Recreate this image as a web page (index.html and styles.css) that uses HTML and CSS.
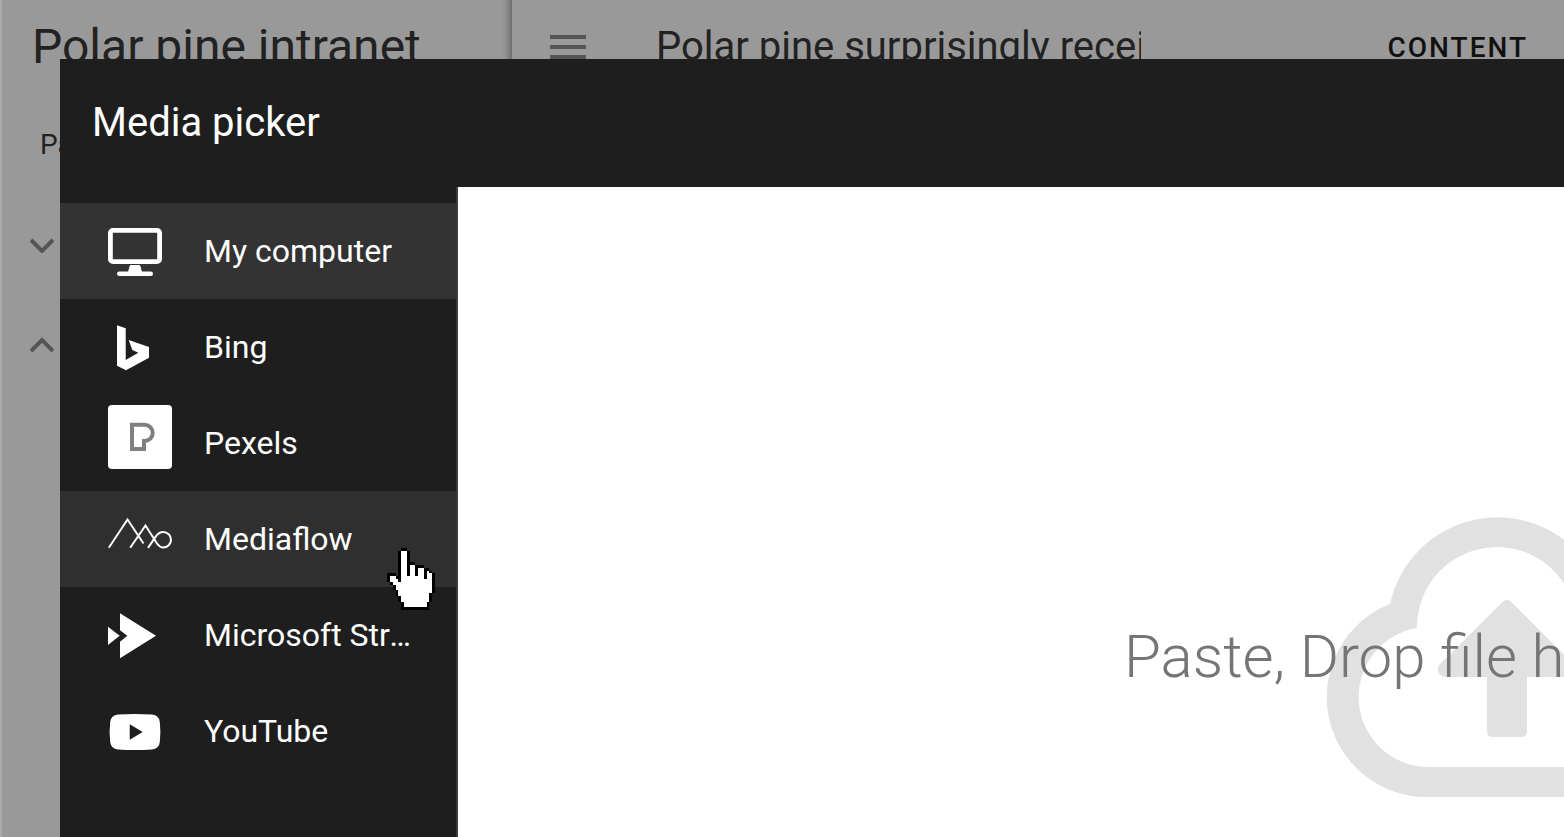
FILE: index.html
```html
<!DOCTYPE html>
<html lang="en">
<head>
  <meta charset="UTF-8">
  <meta name="viewport" content="width=device-width, initial-scale=1.0">
  <title>Media picker - Polar pine intranet</title>
  <link rel="stylesheet" href="styles.css">
</head>
<body>
  <!-- Page behind the dialog -->
  <div class="page">
    <aside class="sidebar">
      <h1>Polar pine intranet</h1>
      <a href="#" class="tree-root">Pages</a>
      <button class="toggle" aria-label="Expand">
        <svg viewBox="0 0 24 16"><path d="M1 3l11 11L23 3"/></svg>
      </button>
      <button class="toggle" aria-label="Collapse">
        <svg viewBox="0 0 24 16"><path d="M1 14L12 3l11 11"/></svg>
      </button>
    </aside>
    <header class="topbar">
      <button class="menu-button" aria-label="Menu">
        <svg viewBox="0 0 36 24"><path d="M0 0h36v4H0zM0 10h36v4H0zM0 20h36v4H0z"/></svg>
      </button>
      <h2>Polar pine surprisingly received</h2>
      <a href="#" class="tab">CONTENT</a>
    </header>
  </div>

  <!-- Media picker dialog -->
  <div class="dialog" role="dialog" aria-labelledby="dialog-title">
    <h2 class="dialog-title" id="dialog-title">Media picker</h2>
    <div class="dialog-body">
      <nav class="sources">
        <a href="#" class="source active">
          <svg class="icon" viewBox="0 0 64 64">
            <rect x="2.4" y="17.4" width="49.2" height="31.2" rx="2.6" fill="none" stroke="#fff" stroke-width="4.8"/>
            <path d="M23 52h8q1 0 1.400 1.300L34 59H20l1.600-5.700Q22 52 23 52z"/>
            <rect x="9" y="58.500" width="36" height="4.500" rx="2.200"/>
          </svg>
          <span>My computer</span>
        </a>
        <a href="#" class="source">
          <svg class="icon" viewBox="0 0 64 64">
            <path d="M9 16.300l8.700 3V51l12.600-7.300-6-2.700-3.600-10L41 38v10.700L18 61.300l-9-4.600z"/>
          </svg>
          <span>Bing</span>
        </a>
        <a href="#" class="source">
          <svg class="icon" viewBox="0 0 64 64">
            <rect width="64" height="64" rx="4"/>
            <path d="M24 19.700h12.500a8.200 8.200 0 0 1 0 16.400H36V44H24z" fill="none" stroke="#808080" stroke-width="4"/>
          </svg>
          <span>Pexels</span>
        </a>
        <a href="#" class="source hovered">
          <svg class="icon" viewBox="0 0 64 64">
            <path d="M.8 46.800L19.500 18.500l16 24M22.200 46.800L37.500 24.500 49 42.500q3 4 6.200 4a7.800 7.800 0 0 0 0-15.600q-4 0-7 4l-8.200 12" fill="none" stroke="#fff" stroke-width="2"/>
          </svg>
          <span>Mediaflow</span>
        </a>
        <a href="#" class="source">
          <svg class="icon" viewBox="0 0 64 64">
            <path d="M0 29.700l11.700 9L0 48zM12 16.300l36 22.400-36 22.600V44.700l7.300-6-7.300-5.400z"/>
          </svg>
          <span>Microsoft Stream</span>
        </a>
        <a href="#" class="source">
          <svg class="icon" viewBox="0 0 64 64">
            <path fill-rule="evenodd" d="M10 21.500q17-1 34 0 7 .5 7.800 7.500 1.200 10 0 20-.8 7-7.800 7.500-17 1-34 0-7-.5-7.800-7.500-1.200-10 0-20 .8-7 7.800-7.500zM21.700 31.300v15.400l13-7.700z"/>
          </svg>
          <span>YouTube</span>
        </a>
      </nav>
      <main class="dropzone">
        <div class="prompt">
          <svg class="cloud" viewBox="0 0 237 280">
            <path d="M240 280H100a100 100 0 0 1-37-193A110 110 0 0 1 240 25.100V71.300A80 80 0 0 0 90 111a70 70 0 0 0 10 139h140z"/>
            <path d="M176 84.500q4-3.500 8 0l66 66q4 9.500-4 9.500H117q-9-3-5-12zM160 155h40v59q0 6-6 6h-28q-6 0-6-6z"/>
          </svg>
          <p>Paste, Drop file here</p>
        </div>
      </main>
    </div>
  </div>

  <!-- Hand pointer over Mediaflow -->
  <svg class="pointer" viewBox="0 0 17 22" shape-rendering="crispEdges">
    <path fill="#000" d="M5 0h2v1h1v4h2v1h3v1h2v1h1v1h1v7h-1v3h-1v3H5v-3H4v-2H3v-2H2v-2H1v-1H0V9h3v1h1V1h1z"/>
    <path fill="#fff" d="M5 1h2v9h1V6h2v4h1V7h2v4h1V8h1v1h1v7h-1v3h-1v2H6v-2H5v-2H4v-2H3v-2H2v-1H1v-2h2v1h1v1h1z"/>
  </svg>
</body>
</html>
```
FILE: styles.css
```css
* {
  margin: 0;
  padding: 0;
  box-sizing: border-box;
}

body {
  font-family: Roboto, Arial, sans-serif;
  color: #222;
  background: #999;
  overflow: hidden;
}

a {
  color: inherit;
  text-decoration: none;
}

button {
  border: none;
  background: none;
  cursor: pointer;
}

svg {
  display: block;
}

/* Page behind the dialog */
.page {
  display: flex;
  height: 100vh;
}

.sidebar {
  width: 512px;
  padding: 19px 28px;
  border-left: 2px solid #aaa;
  box-shadow: inset -12px 0 8px -10px rgba(0, 0, 0, 0.4);
}

.sidebar h1 {
  padding-left: 2px;
  font-size: 48px;
  font-weight: 400;
  line-height: 56px;
  white-space: nowrap;
}

.tree-root {
  display: block;
  margin: 54px 0 76px 10px;
  font-size: 28px;
  line-height: 32px;
}

.toggle {
  display: block;
  margin-bottom: 84px;
}

.toggle svg {
  width: 24px;
  height: 16px;
  fill: none;
  stroke: #555;
  stroke-width: 4;
}

.topbar {
  flex: 1;
  display: flex;
  align-items: center;
  height: 94px;
  padding: 0 36px 0 38px;
}

.menu-button svg {
  width: 36px;
  height: 24px;
  fill: #555;
}

.topbar h2 {
  width: 485px;
  margin-left: 70px;
  font-size: 40px;
  font-weight: 400;
  line-height: 48px;
  white-space: nowrap;
  overflow: hidden;
}

.tab {
  margin-left: auto;
  font-size: 28px;
  font-weight: 500;
  letter-spacing: 2px;
  color: #111;
}

/* Dialog */
.dialog {
  position: fixed;
  top: 59px;
  right: 0;
  bottom: 0;
  left: 60px;
  display: flex;
  flex-direction: column;
  background: #1e1e1e;
  color: #fff;
}

.dialog-title {
  padding: 32px;
  font-size: 40px;
  font-weight: 400;
  line-height: 64px;
}

.dialog-body {
  flex: 1;
  display: flex;
  min-height: 0;
}

.sources {
  width: 398px;
  padding-top: 16px;
  border-right: 2px solid #3c3c3c;
}

.source {
  display: flex;
  align-items: center;
  gap: 32px;
  height: 96px;
  padding: 0 32px 0 48px;
  font-size: 32px;
}

.source.active {
  background: #333;
}

.source.hovered,
.source:hover {
  background: #2f2f2f;
}

.source span {
  overflow: hidden;
  white-space: nowrap;
  text-overflow: ellipsis;
}

.icon {
  flex: none;
  align-self: flex-start;
  width: 64px;
  height: 64px;
  margin-top: 10px;
  fill: #fff;
}

/* Drop area */
.dropzone {
  flex: 1;
  min-width: 0;
  padding-top: 330px;
  background: #fff;
  overflow: hidden;
}

.prompt {
  display: grid;
  grid-template-columns: minmax(0, 1fr);
  align-items: center;
  width: 440px;
  margin-left: auto;
  overflow: hidden;
}

.cloud,
.prompt p {
  grid-area: 1 / 1;
}

.cloud {
  justify-self: end;
  width: 237px;
  height: 280px;
  fill: #e1e1e1;
}

.prompt p {
  font-size: 60px;
  font-weight: 300;
  line-height: 72px;
  color: #757575;
  white-space: nowrap;
}

.pointer {
  position: absolute;
  top: 548px;
  left: 387px;
  width: 48px;
  height: 62px;
}
```
